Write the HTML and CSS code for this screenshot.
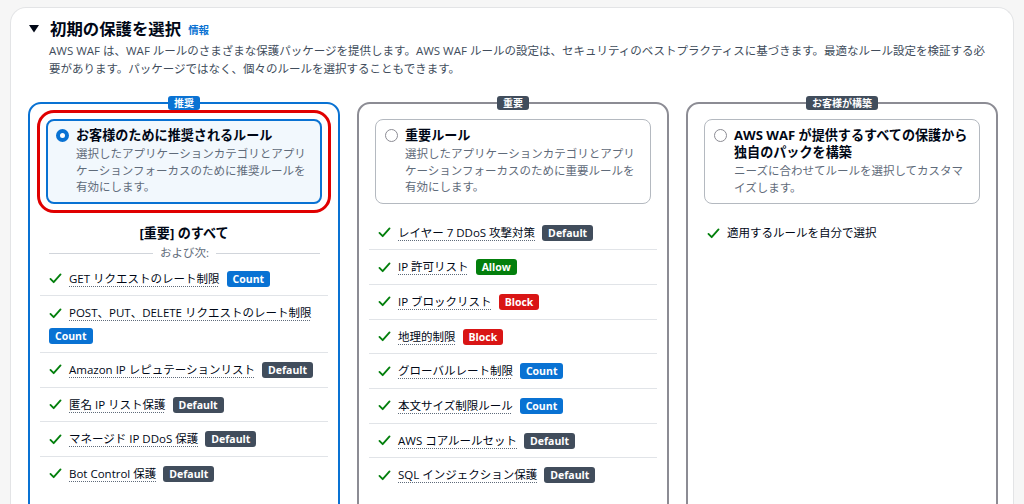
FILE: index.html
```html
<!DOCTYPE html>
<html lang="ja">
<head>
  <meta charset="UTF-8">
  <meta name="viewport" content="width=device-width, initial-scale=1.0">
  <title>初期の保護を選択</title>
  <link rel="stylesheet" href="styles.css">
</head>
<body>
  <section class="container">
    <header class="section-header">
      <h2 class="section-title">
        <svg class="caret" viewBox="0 0 10 8" aria-hidden="true"><polygon points="0,0 10,0 5,7.5" fill="#000716"/></svg>
        <span>初期の保護を選択</span>
        <a class="info-link" href="#">情報</a>
      </h2>
      <p class="section-desc">AWS WAF は、WAF ルールのさまざまな保護パッケージを提供します。AWS WAF ルールの設定は、セキュリティのベストプラクティスに基づきます。最適なルール設定を検証する必要があります。パッケージではなく、個々のルールを選択することもできます。</p>
    </header>

    <div class="packages">
      <!-- Recommended -->
      <div class="package package-selected">
        <span class="package-badge badge-blue">推奨</span>
        <label class="tile tile-selected">
          <span class="radio radio-checked"></span>
          <span class="tile-text">
            <span class="tile-title">お客様のために推奨されるルール</span>
            <span class="tile-desc">選択したアプリケーションカテゴリとアプリケーションフォーカスのために推奨ルールを有効にします。</span>
          </span>
        </label>
        <div class="includes">[重要] のすべて</div>
        <div class="and-next"><span>および次:</span></div>
        <ul class="rule-list">
          <li class="rule">
            <svg class="check" viewBox="0 0 14 12"><path d="M1.5 6.5 L5 10 L12.5 1.5"/></svg>
            <span class="rule-name">GET リクエストのレート制限</span>
            <span class="tag tag-count">Count</span>
          </li>
          <li class="rule">
            <svg class="check" viewBox="0 0 14 12"><path d="M1.5 6.5 L5 10 L12.5 1.5"/></svg>
            <span class="rule-name">POST、PUT、DELETE リクエストのレート制限</span>
            <span class="tag tag-count">Count</span>
          </li>
          <li class="rule">
            <svg class="check" viewBox="0 0 14 12"><path d="M1.5 6.5 L5 10 L12.5 1.5"/></svg>
            <span class="rule-name">Amazon IP レピュテーションリスト</span>
            <span class="tag tag-default">Default</span>
          </li>
          <li class="rule">
            <svg class="check" viewBox="0 0 14 12"><path d="M1.5 6.5 L5 10 L12.5 1.5"/></svg>
            <span class="rule-name">匿名 IP リスト保護</span>
            <span class="tag tag-default">Default</span>
          </li>
          <li class="rule">
            <svg class="check" viewBox="0 0 14 12"><path d="M1.5 6.5 L5 10 L12.5 1.5"/></svg>
            <span class="rule-name">マネージド IP DDoS 保護</span>
            <span class="tag tag-default">Default</span>
          </li>
          <li class="rule">
            <svg class="check" viewBox="0 0 14 12"><path d="M1.5 6.5 L5 10 L12.5 1.5"/></svg>
            <span class="rule-name">Bot Control 保護</span>
            <span class="tag tag-default">Default</span>
          </li>
        </ul>
      </div>

      <!-- Essential -->
      <div class="package">
        <span class="package-badge badge-dark">重要</span>
        <label class="tile">
          <span class="radio"></span>
          <span class="tile-text">
            <span class="tile-title">重要ルール</span>
            <span class="tile-desc">選択したアプリケーションカテゴリとアプリケーションフォーカスのために重要ルールを有効にします。</span>
          </span>
        </label>
        <ul class="rule-list">
          <li class="rule">
            <svg class="check" viewBox="0 0 14 12"><path d="M1.5 6.5 L5 10 L12.5 1.5"/></svg>
            <span class="rule-name">レイヤー 7 DDoS 攻撃対策</span>
            <span class="tag tag-default">Default</span>
          </li>
          <li class="rule">
            <svg class="check" viewBox="0 0 14 12"><path d="M1.5 6.5 L5 10 L12.5 1.5"/></svg>
            <span class="rule-name">IP 許可リスト</span>
            <span class="tag tag-allow">Allow</span>
          </li>
          <li class="rule">
            <svg class="check" viewBox="0 0 14 12"><path d="M1.5 6.5 L5 10 L12.5 1.5"/></svg>
            <span class="rule-name">IP ブロックリスト</span>
            <span class="tag tag-block">Block</span>
          </li>
          <li class="rule">
            <svg class="check" viewBox="0 0 14 12"><path d="M1.5 6.5 L5 10 L12.5 1.5"/></svg>
            <span class="rule-name">地理的制限</span>
            <span class="tag tag-block">Block</span>
          </li>
          <li class="rule">
            <svg class="check" viewBox="0 0 14 12"><path d="M1.5 6.5 L5 10 L12.5 1.5"/></svg>
            <span class="rule-name">グローバルレート制限</span>
            <span class="tag tag-count">Count</span>
          </li>
          <li class="rule">
            <svg class="check" viewBox="0 0 14 12"><path d="M1.5 6.5 L5 10 L12.5 1.5"/></svg>
            <span class="rule-name">本文サイズ制限ルール</span>
            <span class="tag tag-count">Count</span>
          </li>
          <li class="rule">
            <svg class="check" viewBox="0 0 14 12"><path d="M1.5 6.5 L5 10 L12.5 1.5"/></svg>
            <span class="rule-name">AWS コアルールセット</span>
            <span class="tag tag-default">Default</span>
          </li>
          <li class="rule">
            <svg class="check" viewBox="0 0 14 12"><path d="M1.5 6.5 L5 10 L12.5 1.5"/></svg>
            <span class="rule-name">SQL インジェクション保護</span>
            <span class="tag tag-default">Default</span>
          </li>
        </ul>
      </div>

      <!-- Build your own -->
      <div class="package">
        <span class="package-badge badge-dark">お客様が構築</span>
        <label class="tile">
          <span class="radio"></span>
          <span class="tile-text">
            <span class="tile-title">AWS WAF が提供するすべての保護から独自のパックを構築</span>
            <span class="tile-desc">ニーズに合わせてルールを選択してカスタマイズします。</span>
          </span>
        </label>
        <ul class="rule-list">
          <li class="rule">
            <svg class="check" viewBox="0 0 14 12"><path d="M1.5 6.5 L5 10 L12.5 1.5"/></svg>
            <span class="rule-plain">適用するルールを自分で選択</span>
          </li>
        </ul>
      </div>
    </div>
  </section>
</body>
</html>
```

FILE: styles.css
```css
body {
  font-family: "Open Sans", "Noto Sans CJK JP", sans-serif;
  font-size: 11.5px;
  color: #000716;
  background-color: #f6f6f6;
  margin: 0;
  padding: 7px 10px 0;
}

.container {
  background-color: #fff;
  border: 1px solid #e3e4e6;
  border-bottom: none;
  border-radius: 16px 16px 0 0;
  padding: 9px 15px 0 17px;
}

.section-title {
  display: flex;
  align-items: center;
  margin: 0;
  font-size: 16.4px;
  line-height: 20px;
  font-weight: 700;
}

.caret {
  width: 10px;
  height: 8px;
  margin: 0 11px 0 1px;
}

.info-link {
  margin-left: 7px;
  margin-top: 3px;
  font-size: 10.5px;
  font-weight: 700;
  color: #0972d3;
  text-decoration: none;
}

.section-desc {
  margin: 2px 10px 0 21px;
  line-height: 18px;
  color: #414d5c;
}

.packages {
  display: grid;
  grid-template-columns: repeat(3, 1fr);
  gap: 17px;
  margin-top: 24px;
}

.package {
  position: relative;
  border: 2px solid #8c8c94;
  border-radius: 13px;
  padding: 15px 10px 60px;
}

.package-selected {
  border-color: #0972d3;
}

.package-badge {
  position: absolute;
  top: -8px;
  left: 50%;
  transform: translateX(-50%);
  padding: 0 6px;
  border-radius: 3px;
  font-size: 10px;
  line-height: 14px;
  font-weight: 700;
  color: #fff;
  white-space: nowrap;
}

.badge-blue {
  background-color: #0972d3;
}

.badge-dark {
  background-color: #414d5c;
}

/* radio tiles */
.tile {
  display: flex;
  align-items: flex-start;
  gap: 7px;
  margin: 0 6px;
  padding: 6px 8px 6px 8px;
  border: 1px solid #b4b9c0;
  border-radius: 8px;
  cursor: pointer;
}

.package:not(.package-selected) .tile {
  padding: 7px 9px 7px 9px;
}

.tile-selected {
  border: 2px solid #0972d3;
  background-color: #f2f8fd;
  outline: 3px solid #e00000;
  outline-offset: 6px;
}

.radio {
  flex: none;
  box-sizing: border-box;
  width: 13px;
  height: 13px;
  margin-top: 2px;
  border: 1.5px solid #8c8c94;
  border-radius: 50%;
  background-color: #fff;
}

.radio-checked {
  border: 4px solid #0972d3;
}

.tile-text {
  display: flex;
  flex-direction: column;
}

.tile-title {
  font-size: 13.1px;
  line-height: 17px;
  font-weight: 700;
  margin-bottom: 2px;
}

.tile-desc {
  line-height: 16.5px;
  color: #5f6b7a;
}

/* included rules */
.includes {
  margin-top: 12px;
  padding-top: 8px;
  text-align: center;
  font-size: 13.1px;
  line-height: 18px;
  font-weight: 700;
}

.and-next {
  display: flex;
  align-items: center;
  gap: 7px;
  margin: 2px 8px 0 9px;
  line-height: 18px;
  color: #5f6b7a;
}

.and-next::before,
.and-next::after {
  content: "";
  flex: 1;
  border-top: 1px solid #d1d5db;
  margin-top: 2px;
}

.rule-list {
  list-style: none;
  margin: 12px 0 0;
  padding: 0;
}

.includes + .and-next + .rule-list {
  margin-top: 0;
}

.rule {
  display: flex;
  flex-wrap: wrap;
  align-items: center;
  column-gap: 7px;
  row-gap: 6px;
  padding: 8px 9px 7.7px;
  border-bottom: 1px solid #e1e4e8;
}

.rule:last-child {
  border-bottom: none;
}

.rule > * {
  height: 18px;
  line-height: 18px;
}

.check {
  width: 13px;
  fill: none;
  stroke: #037f0c;
  stroke-width: 2;
  stroke-linecap: round;
  stroke-linejoin: round;
}

.rule > .check {
  height: 11px;
}

.rule-name {
  text-decoration: underline dotted #5f6b7a;
  text-decoration-thickness: 1px;
  text-underline-offset: 3px;
}

.tag {
  padding: 0 6px;
  border-radius: 3px;
  font-size: 10.5px;
  font-weight: 700;
  color: #fff;
}

.rule > .tag {
  height: 16px;
  line-height: 16px;
}

.tag-count {
  background-color: #0972d3;
}

.tag-default {
  background-color: #414d5c;
}

.tag-allow {
  background-color: #037f0c;
}

.tag-block {
  background-color: #d91515;
}
```
